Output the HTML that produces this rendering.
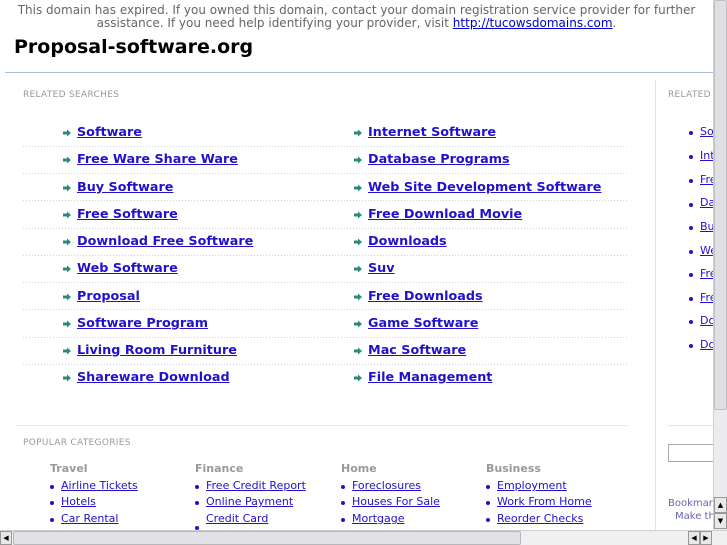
<!DOCTYPE html>
<html><head><meta charset="utf-8"><style>
*{margin:0;padding:0;box-sizing:border-box}
body{width:727px;height:545px;overflow:hidden;background:#fff;font-family:"DejaVu Sans","Liberation Sans",sans-serif;position:relative}
.a{position:absolute;white-space:nowrap}
.top{left:0;width:713px;text-align:center;font-size:12px;color:#666;line-height:13px;top:4px}
.top a{color:#00c}
.title{left:14px;top:36px;font-size:19px;font-weight:bold;color:#000}
.lbl{font-size:9px;color:#999;letter-spacing:.3px}
.rs{font-size:12.75px;font-weight:bold;color:#2211cc;text-decoration:underline;margin-top:1px}
.ch{font-size:11px;font-weight:bold;color:#999}
.cl{font-size:11px;color:#2211cc;text-decoration:underline}
.b{position:absolute;width:4px;height:4px;border-radius:50%;background:#2211cc}
</style></head><body>
<div class="a top">This domain has expired. If you owned this domain, contact your domain registration service provider for further<br>assistance. If you need help identifying your provider, visit <a href="#">http://tucowsdomains.com</a>.</div>
<div class="a title">Proposal-software.org</div>
<div class="a" style="left:5px;top:72px;width:722px;height:1px;background:#a8bcd8"></div>
<div class="a" style="left:655px;top:80px;width:1px;height:450px;background:#dde4f0"></div>
<div class="a lbl" style="left:23px;top:90px">RELATED SEARCHES</div>
<div class="a lbl" style="left:668px;top:90px">RELATED</div>

<div class="a rs" style="left:77px;top:124px">Software</div>
<div class="a rs" style="left:77px;top:151px">Free Ware Share Ware</div>
<div class="a rs" style="left:77px;top:179px">Buy Software</div>
<div class="a rs" style="left:77px;top:206px">Free Software</div>
<div class="a rs" style="left:77px;top:233px">Download Free Software</div>
<div class="a rs" style="left:77px;top:260px">Web Software</div>
<div class="a rs" style="left:77px;top:288px">Proposal</div>
<div class="a rs" style="left:77px;top:315px">Software Program</div>
<div class="a rs" style="left:77px;top:342px">Living Room Furniture</div>
<div class="a rs" style="left:77px;top:369px">Shareware Download</div>
<div class="a rs" style="left:368px;top:124px">Internet Software</div>
<div class="a rs" style="left:368px;top:151px">Database Programs</div>
<div class="a rs" style="left:368px;top:179px">Web Site Development Software</div>
<div class="a rs" style="left:368px;top:206px">Free Download Movie</div>
<div class="a rs" style="left:368px;top:233px">Downloads</div>
<div class="a rs" style="left:368px;top:260px">Suv</div>
<div class="a rs" style="left:368px;top:288px">Free Downloads</div>
<div class="a rs" style="left:368px;top:315px">Game Software</div>
<div class="a rs" style="left:368px;top:342px">Mac Software</div>
<div class="a rs" style="left:368px;top:369px">File Management</div>

<svg class="a" style="left:0;top:0" width="660" height="400">
<defs><path id="ar" d="M0 -1.5h4v-2l4 3.5-4 3.5v-2h-4z"/></defs>
<g fill="#2a8a7a">
<use href="#ar" x="63" y="133"/><use href="#ar" x="63" y="160"/><use href="#ar" x="63" y="188"/><use href="#ar" x="63" y="215"/><use href="#ar" x="63" y="242"/><use href="#ar" x="63" y="269"/><use href="#ar" x="63" y="297"/><use href="#ar" x="63" y="324"/><use href="#ar" x="63" y="351"/><use href="#ar" x="63" y="378"/>
<use href="#ar" x="354" y="133"/><use href="#ar" x="354" y="160"/><use href="#ar" x="354" y="188"/><use href="#ar" x="354" y="215"/><use href="#ar" x="354" y="242"/><use href="#ar" x="354" y="269"/><use href="#ar" x="354" y="297"/><use href="#ar" x="354" y="324"/><use href="#ar" x="354" y="351"/><use href="#ar" x="354" y="378"/>
</g>
<g stroke="#c8d4e8" stroke-dasharray="1 2">
<line x1="23" x2="628" y1="146.5" y2="146.5"/><line x1="23" x2="628" y1="173.5" y2="173.5"/><line x1="23" x2="628" y1="200.5" y2="200.5"/><line x1="23" x2="628" y1="228.5" y2="228.5"/><line x1="23" x2="628" y1="255.5" y2="255.5"/><line x1="23" x2="628" y1="282.5" y2="282.5"/><line x1="23" x2="628" y1="309.5" y2="309.5"/><line x1="23" x2="628" y1="337.5" y2="337.5"/><line x1="23" x2="628" y1="364.5" y2="364.5"/>
</g>
</svg>

<div class="b" style="left:689px;top:131px"></div><div class="a cl" style="left:700px;top:125px">So</div>
<div class="b" style="left:689px;top:155px"></div><div class="a cl" style="left:700px;top:149px">Int</div>
<div class="b" style="left:689px;top:179px"></div><div class="a cl" style="left:700px;top:173px">Fre</div>
<div class="b" style="left:689px;top:203px"></div><div class="a cl" style="left:700px;top:196px">Da</div>
<div class="b" style="left:689px;top:226px"></div><div class="a cl" style="left:700px;top:220px">Bu</div>
<div class="b" style="left:689px;top:250px"></div><div class="a cl" style="left:700px;top:244px">We</div>
<div class="b" style="left:689px;top:273px"></div><div class="a cl" style="left:700px;top:267px">Fre</div>
<div class="b" style="left:689px;top:297px"></div><div class="a cl" style="left:700px;top:291px">Fre</div>
<div class="b" style="left:689px;top:320px"></div><div class="a cl" style="left:700px;top:314px">Do</div>
<div class="b" style="left:689px;top:344px"></div><div class="a cl" style="left:700px;top:338px">Do</div>
<div class="a" style="left:668px;top:425px;width:50px;height:1px;background:#dde4f0"></div>
<div class="a" style="left:668px;top:444px;width:50px;height:18px;border:1px solid #aaa;border-right:none"></div>
<div class="a" style="left:668px;top:498px;font-size:10px;color:#66a">Bookmark</div>
<div class="a" style="left:675px;top:511px;font-size:10px;color:#66a">Make th</div>

<div class="a" style="left:16px;top:425px;width:612px;height:1px;background:#e4eaf4"></div>
<div class="a lbl" style="left:23px;top:438px">POPULAR CATEGORIES</div>
<div class="a ch" style="left:50px;top:462px">Travel</div>
<div class="a ch" style="left:195px;top:462px">Finance</div>
<div class="a ch" style="left:341px;top:462px">Home</div>
<div class="a ch" style="left:486px;top:462px">Business</div>

<div class="b" style="left:50px;top:485px"></div><div class="a cl" style="left:61px;top:479px">Airline Tickets</div>
<div class="b" style="left:50px;top:501px"></div><div class="a cl" style="left:61px;top:495px">Hotels</div>
<div class="b" style="left:50px;top:518px"></div><div class="a cl" style="left:61px;top:512px">Car Rental</div>
<div class="b" style="left:195px;top:485px"></div><div class="a cl" style="left:206px;top:479px">Free Credit Report</div>
<div class="b" style="left:195px;top:501px"></div><div class="a cl" style="left:206px;top:495px">Online Payment</div>
<div class="a cl" style="left:206px;top:512px">Credit Card</div>
<div class="b" style="left:195px;top:526px"></div>
<div class="b" style="left:341px;top:485px"></div><div class="a cl" style="left:352px;top:479px">Foreclosures</div>
<div class="b" style="left:341px;top:501px"></div><div class="a cl" style="left:352px;top:495px">Houses For Sale</div>
<div class="b" style="left:341px;top:518px"></div><div class="a cl" style="left:352px;top:512px">Mortgage</div>
<div class="b" style="left:486px;top:485px"></div><div class="a cl" style="left:497px;top:479px">Employment</div>
<div class="b" style="left:486px;top:501px"></div><div class="a cl" style="left:497px;top:495px">Work From Home</div>
<div class="b" style="left:486px;top:518px"></div><div class="a cl" style="left:497px;top:512px">Reorder Checks</div>

<div class="a" style="left:713px;top:0;width:14px;height:530px;background:#ececee;border-left:1px solid #d0d0d4"></div>
<div class="a" style="left:714px;top:0;width:13px;height:410px;background:#e0e0e4;border:1px solid #c0c0c4;border-radius:2px"></div>
<div class="a" style="left:714px;top:497px;width:13px;height:16px;background:#e8e8ea;border:1px solid #999;font-size:7px;text-align:center;line-height:14px">▲</div>
<div class="a" style="left:714px;top:513px;width:13px;height:16px;background:#e8e8ea;border:1px solid #999;font-size:7px;text-align:center;line-height:14px">▼</div>
<div class="a" style="left:0;top:530px;width:727px;height:15px;background:#f0f0f0;border-top:1px solid #d0d0d4"></div>
<div class="a" style="left:0;top:531px;width:12px;height:14px;border:1px solid #999;background:#e8e8ea;font-size:7px;line-height:12px;text-align:center">◀</div>
<div class="a" style="left:13px;top:531px;width:508px;height:14px;background:#e2e2e6;border:1px solid #b8b8bc;border-radius:2px"></div>
<div class="a" style="left:688px;top:531px;width:12px;height:14px;border:1px solid #999;background:#e8e8ea;font-size:7px;line-height:12px;text-align:center">◀</div>
<div class="a" style="left:700px;top:531px;width:12px;height:14px;border:1px solid #999;background:#e8e8ea;font-size:7px;line-height:12px;text-align:center">▶</div>
</body></html>
